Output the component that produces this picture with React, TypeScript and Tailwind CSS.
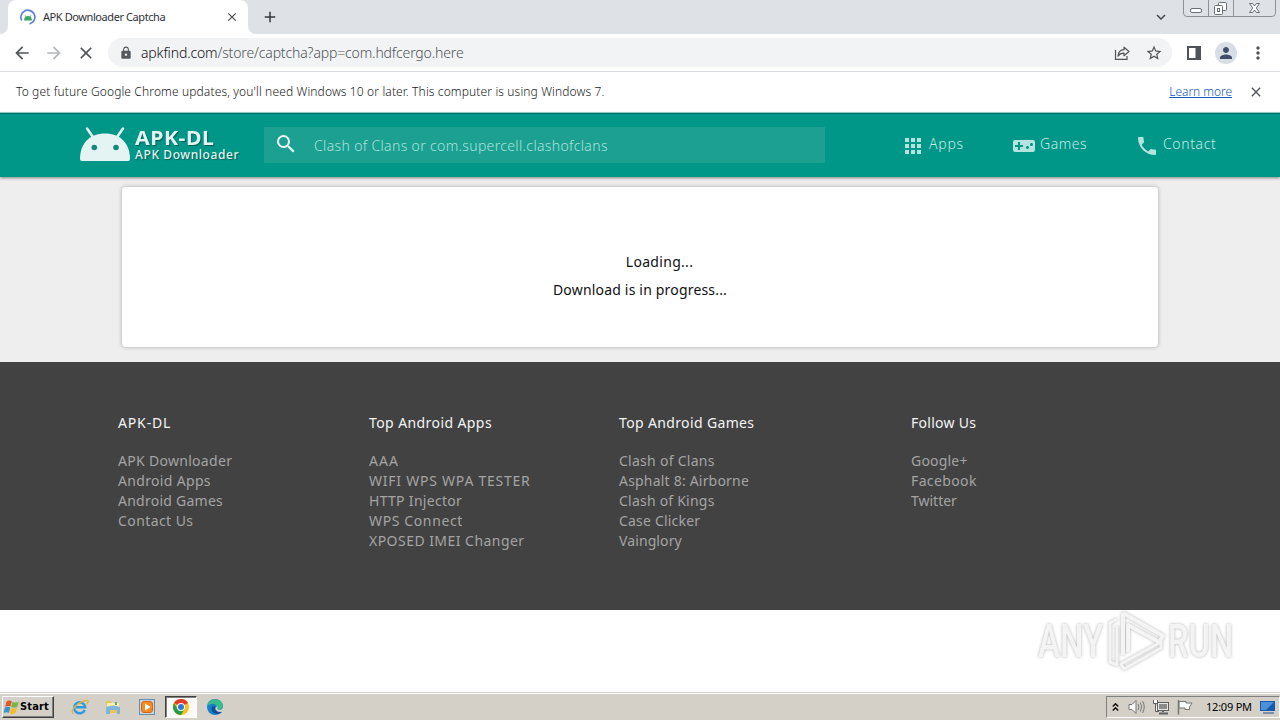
import React from "react";
import {
  MdApps,
  MdVideogameAsset,
  MdPhone,
  MdSearch,
  MdLock,
  MdArrowBack,
  MdArrowForward,
  MdClose,
  MdAdd,
  MdStarBorder,
  MdMoreVert,
  MdPerson,
  MdKeyboardArrowDown,
} from "react-icons/md";

const columns = [
  {
    title: "APK-DL",
    width: "w-[251px]",
    titleTrack: "tracking-[0.85px]",
    links: [
      ["APK Downloader", "tracking-[0.3px]"],
      ["Android Apps", "tracking-[0.33px]"],
      ["Android Games", "tracking-[0.25px]"],
      ["Contact Us", "tracking-[0.42px]"],
    ],
  },
  {
    title: "Top Android Apps",
    width: "w-[250px]",
    titleTrack: "tracking-[0.41px]",
    links: [
      ["AAA", "tracking-[1px]"],
      ["WIFI WPS WPA TESTER", "tracking-[0.76px]"],
      ["HTTP Injector", "tracking-[0.3px]"],
      ["WPS Connect", "tracking-[0.62px]"],
      ["XPOSED IMEI Changer", "tracking-[0.46px]"],
    ],
  },
  {
    title: "Top Android Games",
    width: "w-[292px]",
    titleTrack: "tracking-[0.36px]",
    links: [
      ["Clash of Clans", "tracking-[0.27px]"],
      ["Asphalt 8: Airborne", "tracking-[0.2px]"],
      ["Clash of Kings", "tracking-[0.22px]"],
      ["Case Clicker", "tracking-[0.2px]"],
      ["Vainglory", "tracking-[0.1px]"],
    ],
  },
  {
    title: "Follow Us",
    width: "w-[200px]",
    titleTrack: "tracking-[0.27px]",
    links: [
      ["Google+", "tracking-[0.2px]"],
      ["Facebook", "tracking-[0.37px]"],
      ["Twitter", "tracking-[0px]"],
    ],
  },
];

function Favicon() {
  return (
    <svg className="h-4 w-4 shrink-0" viewBox="0 0 16 16" fill="none">
      <path d="M1.700 11.500A7 7 0 1 1 12.200 13.700" stroke="#5b84d8" strokeWidth="1.700" />
      <path d="M12.600 13.200A7 7 0 0 1 9.500 14.800" stroke="#5b84d8" strokeWidth="1.700" />
      <path d="M4 11.500a4 4.600 0 0 1 8 0z" fill="#3fa667" />
      <path d="M5 6.300l1 1.700M11 6.300L10 8" stroke="#3fa667" strokeWidth=".8" />
    </svg>
  );
}

function TabStrip() {
  return (
    <div className="flex h-[34px] bg-[#dee1e6]">
      <div className="flex w-2 items-end bg-white">
        <div className="h-full w-2 rounded-br-lg bg-[#dee1e6]" />
      </div>
      <div className="flex h-[34px] w-[240px] items-center rounded-t-lg bg-white pl-3 pr-[9px]">
        <Favicon />
        <span className="ml-[7px] flex-1 whitespace-nowrap text-[11px] tracking-[-0.42px] text-[#303236]">APK Downloader Captcha</span>
        <MdClose className="h-[14px] w-[14px] text-[#45494d]" />
      </div>
      <div className="w-2 bg-white">
        <div className="h-full w-2 rounded-bl-lg bg-[#dee1e6]" />
      </div>
      <MdAdd className="ml-[5px] mt-2 h-[18px] w-[18px] text-[#35373b]" />
      <div className="flex-1" />
      <MdKeyboardArrowDown className="mr-[13px] mt-2 h-[18px] w-[18px] text-[#45484c]" />
      <svg className="h-[17px] w-[97px]" viewBox="0 0 97 17" fill="none">
        <path d="M.5 0V13Q.5 16.5 4 16.5H89Q92.500 16.5 92.500 13V0M25.500 0V16M50.500 0V16" stroke="#8d9299" />
        <rect x="7.500" y="8.500" width="11" height="4" rx="1.500" fill="#fff" stroke="#696d75" />
        <rect x="35.500" y="2.500" width="8" height="8" rx="1" fill="#fff" stroke="#696d75" />
        <rect x="31.500" y="5.500" width="8" height="9" rx="1" fill="#fff" stroke="#696d75" />
        <rect x="34.500" y="8.500" width="2" height="3" stroke="#696d75" />
        <path d="M66.500 3.500h3l2 2.500 2-2.500h3l-3.200 4.500 3.200 4.500h-3l-2-2.500-2 2.500h-3L69.700 8z" fill="#fff" stroke="#696d75" />
      </svg>
    </div>
  );
}

function Toolbar() {
  return (
    <div className="flex h-[38px] items-center border-b border-[#d8dadd] bg-white text-[#505357]">
      <MdArrowBack className="ml-3 h-5 w-5" />
      <MdArrowForward className="ml-3 h-5 w-5 text-[#b4b6b9]" />
      <MdClose className="ml-3 h-5 w-5" />
      <div className="ml-3 flex h-[29px] w-[1064px] items-center rounded-full bg-[#f1f3f4]">
        <MdLock className="ml-[11px] h-[14px] w-[14px] text-[#55585c]" />
        <span className="ml-2 whitespace-nowrap text-[14px] font-light tracking-[-0.14px] text-[#505458]">
          <span className="text-[#101114]">apkfind.com</span>/store/captcha?app=com.hdfcergo.here
        </span>
        <div className="flex-1" />
        <svg className="mr-[15px] h-4 w-4" viewBox="0 0 16 16" fill="none" stroke="currentColor" strokeWidth="1.2">
          <path d="M1.500 5v9.400H13V11" />
          <path d="M10 2.200l5 4.300-5 4.200V8.200Q6 8 4 11.200 4.500 5 10 4.700z" strokeLinejoin="round" />
        </svg>
        <MdStarBorder className="mr-[9px] h-[18px] w-[18px]" />
      </div>
      <svg className="ml-[15px] h-[14px] w-[14px]" viewBox="0 0 14 14">
        <path d="M0 0h14v14H0zM2 2v10h6.500V2z" fill="currentColor" fillRule="evenodd" />
      </svg>
      <div className="ml-[14px] flex h-[22px] w-[22px] items-center justify-center rounded-full bg-[#d8dee6]">
        <MdPerson className="h-[18px] w-[18px] text-[#414e6b]" />
      </div>
      <MdMoreVert className="ml-[11px] h-5 w-5" />
    </div>
  );
}

function InfoBar() {
  return (
    <div className="flex h-[41px] items-center border-b border-[#9fd6d0] bg-white pb-px pl-4 text-[12px] font-light text-[#18191b]">
      <span className="flex-1 whitespace-nowrap tracking-[0.13px]">
        To get future Google Chrome updates, you'll need Windows 10 or later. This computer is using Windows 7.
      </span>
      <span className="whitespace-nowrap tracking-[-0.05px] text-[#1259b5] underline underline-offset-1">Learn more</span>
      <MdClose className="ml-4 mr-4 h-4 w-4 text-[#505357]" />
    </div>
  );
}

function SiteHeader() {
  return (
    <header className="relative z-10 flex h-[64px] bg-[#009688] text-[#c4ece8] shadow-[0_1px_3px_rgba(0,0,0,0.45),inset_0_1px_0_rgba(0,0,0,0.25)]">
      <svg className="ml-20 mt-[13px] h-[36px] w-[50px]" viewBox="0 0 50 36">
        <path d="M7 2.500l7 10M43 2.500l-7 10" stroke="#e3f4f2" strokeWidth="2.600" strokeLinecap="round" />
        <path d="M0 33C0 17 10 7.500 25 7.500S50 17 50 33Q50 35 48 35H2Q0 35 0 33z" fill="#e3f4f2" />
        <circle cx="14.300" cy="21.500" r="2.800" fill="#13897e" />
        <circle cx="36" cy="21.500" r="2.800" fill="#13897e" />
      </svg>
      <div className="ml-[5px] w-[129px] whitespace-nowrap pt-[15px] text-[#e0f5f2] [text-shadow:1px_1px_1px_rgba(0,0,0,0.4)]">
        <div className="origin-left scale-x-[1.12] text-[19px] font-bold leading-[20px] tracking-[0.45px]">APK-DL</div>
        <div className="text-[12px] font-medium leading-[14px] tracking-[0.6px]">APK Downloader</div>
      </div>
      <div className="mt-[14px] flex h-[36px] w-[561px] items-center bg-[#1ba092] pl-[10px]">
        <MdSearch className="mb-[2px] h-6 w-6 text-[#effaf8]" />
        <span className="ml-4 whitespace-nowrap pt-px text-[14px] font-light tracking-[0.35px] text-[#aee0da]">Clash of Clans or com.supercell.clashofclans</span>
      </div>
      <nav className="flex pt-[20px] text-[14px] font-light leading-[22px]">
        <a className="ml-[76px] flex w-[111px]">
          <MdApps className="mt-px h-6 w-6 text-[#b4e4df]" />
          <span className="ml-1 tracking-[0.75px]">Apps</span>
        </a>
        <a className="flex w-[123px]">
          <MdVideogameAsset className="mt-px h-6 w-6 text-[#b4e4df]" />
          <span className="ml-1 tracking-[0.55px]">Games</span>
        </a>
        <a className="flex">
          <MdPhone className="mt-px h-6 w-6 text-[#b4e4df]" />
          <span className="ml-1 tracking-[0.62px]">Contact</span>
        </a>
      </nav>
    </header>
  );
}

function WindowsFlag() {
  return (
    <svg className="h-[17px] w-[17px]" viewBox="0 0 17 17">
      <path d="M3.500 2.500Q6 .8 8.800 2.300L7.500 7.600Q5 6.300 2.200 7.800z" fill="#e4562b" />
      <path d="M9.500 2.700Q12.500 4.200 15.800 2.500L14.300 7.900Q11 9.500 8.200 8z" fill="#78b743" />
      <path d="M2 8.600Q4.800 7.100 7.300 8.500L5.900 13.800Q3.300 12.500.5 14z" fill="#3e91d8" />
      <path d="M8 8.900Q11 10.300 14 8.800L12.500 14.200Q9.500 15.700 6.700 14.200z" fill="#f5bd28" />
    </svg>
  );
}

function Taskbar() {
  return (
    <div className="flex h-[28px] items-start border-t border-[#d4d0c8] bg-[#d4d0c8] pt-[3px] shadow-[inset_0_1px_0_#fff]">
      <div className="ml-[2px] flex h-[22px] w-[52px] items-center border border-b-[#404040] border-l-white border-r-[#404040] border-t-white shadow-[inset_-1px_-1px_0_#808080]">
        <WindowsFlag />
        <span className="font-['DejaVu_Sans_Condensed','DejaVu_Sans',sans-serif] text-[11px] font-bold tracking-[0.15px] text-black">Start</span>
      </div>
      <svg className="ml-[17px] mt-[3px] h-4 w-[18px]" viewBox="0 0 18 16" fill="none">
        <path d="M13.800 11A5.500 5.500 0 1 1 14.200 8.200H5" stroke="#2e9bdf" strokeWidth="2.500" />
        <path d="M2.500 14.500C-2 13 6 3 15 1.500 19 1 16.500 4.500 15.500 5.500" stroke="#e3b443" strokeWidth="1.300" />
      </svg>
      <svg className="ml-4 mt-[3px] h-4 w-4" viewBox="0 0 16 16">
        <path d="M1 2h5l1 2h7v10H1z" fill="#e9c557" />
        <path d="M2 4h12v5H2z" fill="#fbf0b1" />
        <path d="M1 8q7-3 14 0v7h-3v-4H5v4H1z" fill="#7db6d9" />
        <path d="M10 3h2v3h-2z" fill="#62a867" />
      </svg>
      <svg className="ml-[18px] mt-[3px] h-4 w-4" viewBox="0 0 16 16">
        <rect x=".5" y=".5" width="15" height="15" fill="#bfd7e9" stroke="#668fae" />
        <rect x="2.500" y="2.500" width="11" height="11" rx="2.500" fill="#f58a20" stroke="#dc6512" />
        <path d="M6 4.500l5.500 3.500L6 11.500z" fill="#fff" />
      </svg>
      <div className="ml-[10px] flex h-[22px] w-[32px] items-center justify-center border border-b-white border-l-[#404040] border-r-white border-t-[#404040] bg-[#fbfaf8] shadow-[inset_1px_1px_0_#808080]">
        <svg className="h-4 w-4" viewBox="0 0 16 16">
          <circle cx="8" cy="8" r="8" fill="#fbc116" />
          <path d="M8 8L1.070 4A8 8 0 0 1 14.930 4z" fill="#e33b2e" />
          <path d="M1.070 4A8 8 0 0 0 8 16l3.460-6H8L4.500 10z" fill="#299c4c" />
          <circle cx="8" cy="8" r="4" fill="#fff" />
          <circle cx="8" cy="8" r="3" fill="#2879db" />
        </svg>
      </div>
      <svg className="ml-[10px] mt-[3px] h-4 w-4" viewBox="0 0 16 16">
        <circle cx="8" cy="8" r="8" fill="#1680cb" />
        <path d="M.2 7C1 1.500 6-.5 10 .3c4 .8 6 4.200 6 6.500 0 3-3 4.500-5.500 4-1.500-.4-1-1.500-.5-2.500C9.500 4 4 3.500.2 7z" fill="#39bb8b" />
        <path d="M5 8c-2 4 2 7.500 7 6.800 1.500-.2 2.500-1.300 3-2.400-3 1.500-7.500.4-6.700-4.200C7.500 6.500 5.800 6.600 5 8z" fill="#124f98" />
        <path d="M10.500 7c.8 1.300-1 2 .2 3.200 1.500 1.200 4.500.5 5.300-1.700v3.500c-3 2-7.500.5-7.700-3z" fill="#d4d0c8" />
      </svg>
      <div className="flex-1" />
      <div className="flex h-[22px] w-[174px] items-center border border-b-white border-l-[#808080] border-r-white border-t-[#808080] pl-[5px]">
        <svg className="h-2 w-[7px]" viewBox="0 0 7 8" fill="none" stroke="#111" strokeWidth="1.500">
          <path d="M.8 3.500l2.700-2.700 2.700 2.700M.8 7.500l2.700-2.700 2.700 2.700" />
        </svg>
        <svg className="ml-[9px] h-4 w-[17px]" viewBox="0 0 17 16" fill="none">
          <path d="M1 5.500h3l4-4v13l-4-4H1z" fill="#f8f8f6" stroke="#777" />
          <path d="M10 5q2 3 0 6M12.300 3.500q3 4.500 0 9M14.500 2q3.500 6 0 12" stroke="#77797b" />
        </svg>
        <svg className="ml-[8px] h-4 w-[16px]" viewBox="0 0 16 16" fill="none" stroke="#606060">
          <path d="M.5 1v3.500h4V1M2.500 5v7.500H6" fill="#fff" />
          <rect x="4.500" y="3.500" width="11" height="8" fill="#e8e8e6" />
          <path d="M6 5h8v5H6z" fill="#8b8b89" stroke="none" />
          <path d="M10 12v1M6 14.500h9" strokeWidth="2" />
        </svg>
        <svg className="ml-[8px] h-4 w-4" viewBox="0 0 16 16" fill="#fafafa" stroke="#777">
          <path d="M2 2.500h7v1.500h6l-2.500 4v2.500H8V9H2z" />
          <path d="M1.500 1v14.500" strokeWidth="1.500" />
        </svg>
        <span className="ml-[13px] w-[46px] whitespace-nowrap text-[11px] tracking-[-0.22px] text-black">12:09 PM</span>
        <svg className="ml-[8px] h-[14px] w-4" viewBox="0 0 16 14">
          <path d="M0 1h15v10H0z" fill="#1659ad" />
          <path d="M1 2h13L6 10H1z" fill="#4a91d9" />
          <path d="M3 12h11v2H3z" fill="#7891ae" />
        </svg>
      </div>
    </div>
  );
}

function Watermark() {
  return (
    <div className="absolute left-[1038px] top-[609px] flex h-[64px] w-[200px] items-center text-[#f4f4f4] [filter:drop-shadow(0_0_1.5px_rgba(0,0,0,0.3))]">
      <span className="w-[64px] origin-left scale-x-[0.72] font-['Roboto',sans-serif] text-[46px] font-medium leading-none">ANY</span>
      <svg className="ml-[6px] h-[62px] w-[60px] shrink-0" viewBox="0 0 60 62" fill="none" stroke="#f4f4f4" strokeWidth="4" strokeLinejoin="round">
        <path d="M9 9L2 13v39l7 3V16" strokeWidth="3" />
        <path d="M15 3v42M15 3l40 23-4 6-31-17v27" />
        <path d="M13 54l40-22v6L16 59z" strokeWidth="3" />
      </svg>
      <span className="w-[64px] origin-left scale-x-[0.71] font-['Roboto',sans-serif] text-[46px] font-medium leading-none">RUN</span>
    </div>
  );
}

export default function App() {
  return (
    <div className="relative flex h-[720px] w-[1280px] flex-col overflow-hidden bg-white font-['Noto_Sans',sans-serif]">
      <TabStrip />
      <Toolbar />
      <InfoBar />
      <SiteHeader />
      <main className="h-[185px] bg-[#eeeeee] px-[122px] pt-[10px]">
        <div className="flex h-[160px] flex-col items-center rounded bg-white pt-[61px] text-[14px] leading-7 text-[#111] shadow-[0_0_4px_rgba(0,0,0,0.3)]">
          <p className="ml-[39px] tracking-[0.3px]">Loading...</p>
          <p className="tracking-[0.18px]">Download is in progress...</p>
        </div>
      </main>
      <footer className="flex h-[248px] bg-[#424242] pl-[118px] pt-[51px] text-[14px] leading-5">
        {columns.map((column) => (
          <section key={column.title} className={column.width}>
            <h2 className="mb-[18px] whitespace-nowrap text-[#f4f4f4]">
              <span className={column.titleTrack}>{column.title}</span>
            </h2>
            <ul className="whitespace-nowrap text-[#a4a4a4]">
              {column.links.map(([label, track]) => (
                <li key={label}>
                  <span className={track}>{label}</span>
                </li>
              ))}
            </ul>
          </section>
        ))}
      </footer>
      <div className="flex-1" />
      <Taskbar />
      <Watermark />
    </div>
  );
}
